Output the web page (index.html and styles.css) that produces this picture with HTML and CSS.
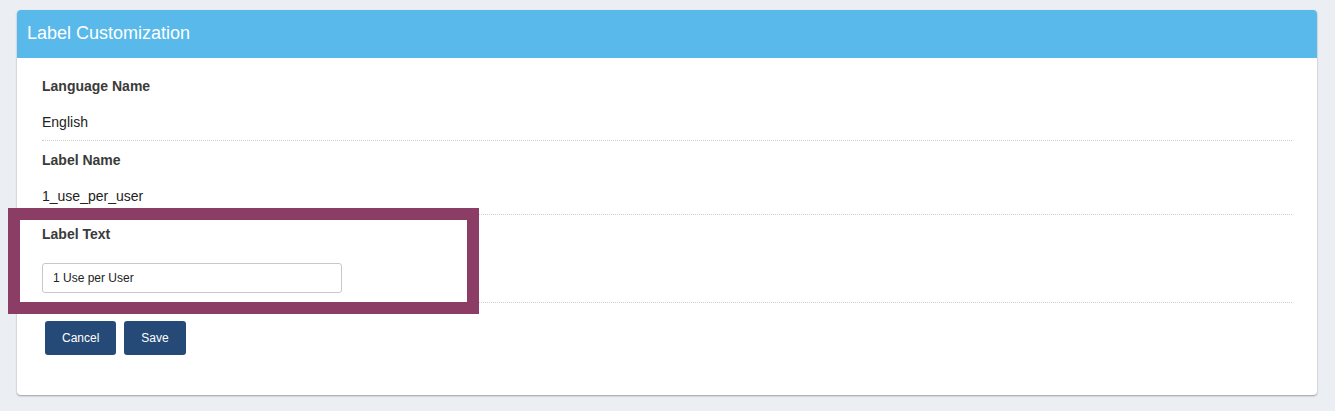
FILE: index.html
```
<!DOCTYPE html>
<html>
	<head>
		<meta charset="UTF-8">
		<title>Label Customization</title>
		<link rel="stylesheet" href="styles.css">
	</head>
	<body>
		<div class="panel">
			<div class="panel-head">Label Customization</div>
			<div class="panel-body">
				<div class="field">
					<div class="field-label">Language Name</div>
					<div class="field-value">English</div>
				</div>
				<div class="field">
					<div class="field-label">Label Name</div>
					<div class="field-value">1_use_per_user</div>
				</div>
				<div class="field field-edit">
					<div class="field-label">Label Text</div>
					<input class="text-input" type="text" value="1 Use per User">
					<!-- highlight annotation -->
					<div class="highlight"></div>
				</div>
				<div class="actions">
					<button class="btn">Cancel</button>
					<button class="btn">Save</button>
				</div>
			</div>
		</div>
	</body>
</html>
```
FILE: styles.css
```
*{
	margin: 0;
	padding: 0;
	box-sizing: border-box;
}
body{
	background: #ebeef2;
	font-family: "Liberation Sans", Arial, sans-serif;
	color: #333;
	padding: 10px 18px 16px 17px;
}
.panel{
	background: #fff;
	border-radius: 4px;
	box-shadow: 0 1px 2px rgba(0,0,0,.35);
}
.panel-head{
	background: #58b9ea;
	color: #fff;
	font-size: 18px;
	height: 48px;
	line-height: 46px;
	padding-left: 10px;
	border-radius: 4px 4px 0 0;
}
.panel-body{
	padding: 9px 25px 40px 25px;
}
.field{
	padding: 9px 0 9px;
	border-bottom: 1px dotted #cfcfcf;
	height: 74px;
}
.field-label{
	font-size: 14px;
	font-weight: bold;
	line-height: 20px;
	color: #3a3a3a;
}
.field-value{
	font-size: 14px;
	line-height: 20px;
	margin-top: 16px;
	color: #222;
}
.field-edit{
	position: relative;
	height: 88px;
}
.text-input{
	display: block;
	margin-top: 19px;
	width: 300px;
	height: 30px;
	border: 1px solid #c8c8c8;
	border-radius: 3px;
	padding: 0 10px;
	font-family: "Liberation Sans", Arial, sans-serif;
	font-size: 12px;
	color: #222;
	outline: none;
}
.highlight{
	position: absolute;
	top: -7px;
	left: -34px;
	width: 471px;
	height: 106px;
	border: 12.5px solid #8b3d66;
	pointer-events: none;
}
.actions{
	display: flex;
	gap: 8px;
	margin-top: 18px;
	padding-left: 3px;
}
.btn{
	background: #264a78;
	color: #fff;
	border: none;
	border-radius: 3px;
	height: 34px;
	padding: 0 17px;
	font-family: "Liberation Sans", Arial, sans-serif;
	font-size: 12px;
}
```
